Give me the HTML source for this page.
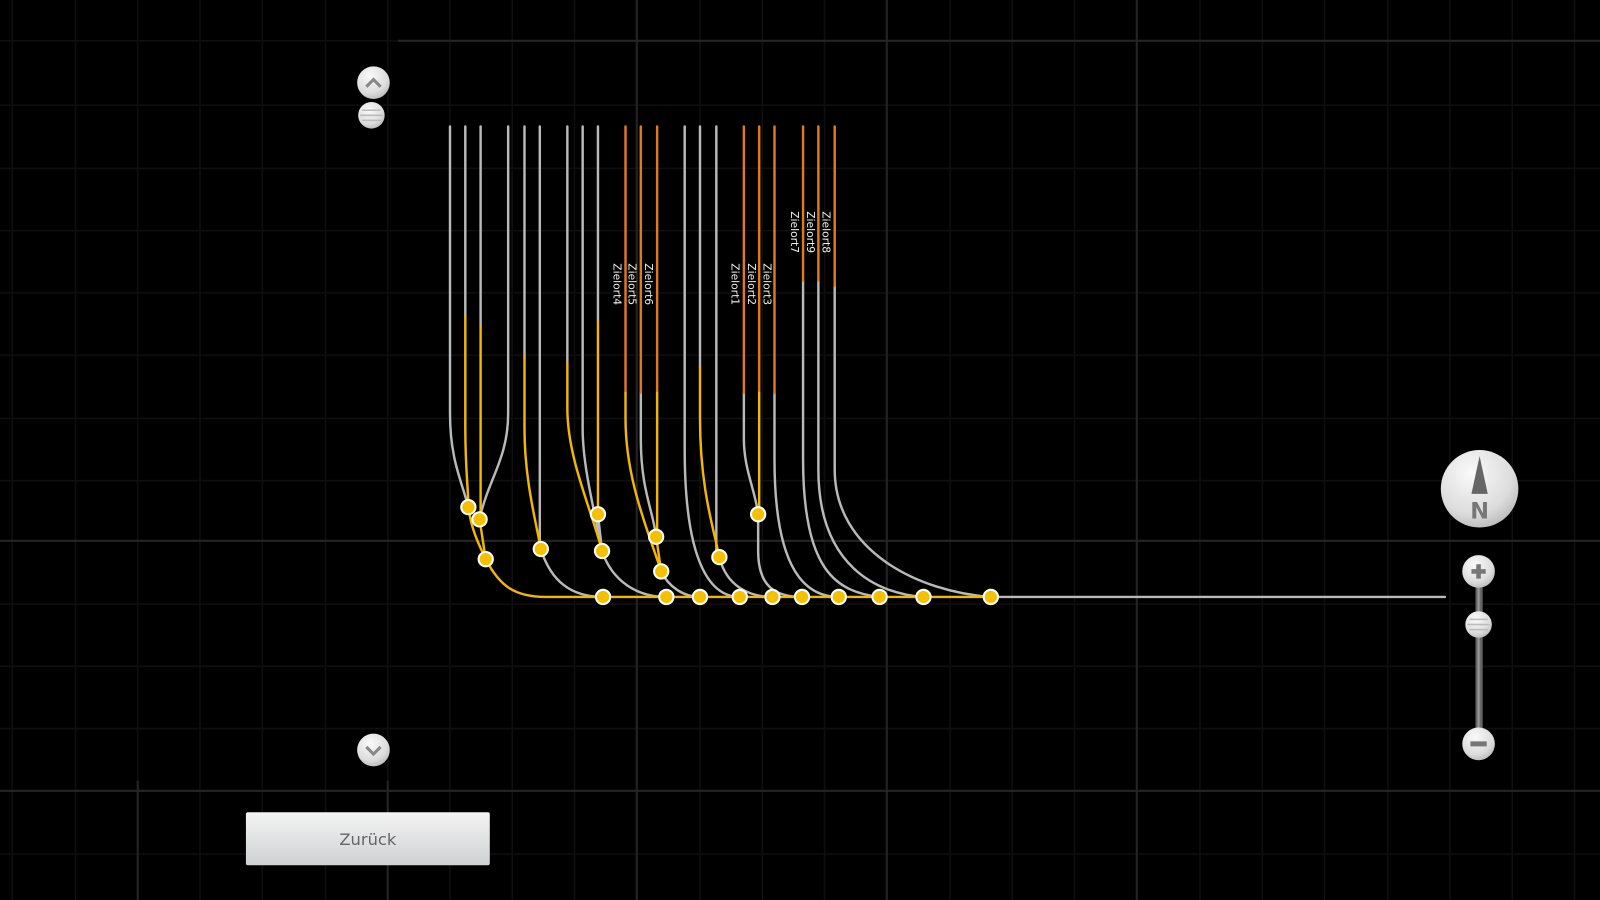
<!DOCTYPE html>
<html><head><meta charset="utf-8"><style>
html,body{margin:0;padding:0;background:#000;width:1600px;height:900px;overflow:hidden}
svg{display:block}
</style></head><body>
<svg width="1600" height="900" viewBox="0 0 1568 882" xmlns="http://www.w3.org/2000/svg">
<defs>
<radialGradient id="btn" cx="40%" cy="30%" r="75%"><stop offset="0" stop-color="#fafafa"/><stop offset="0.7" stop-color="#dcdcdc"/><stop offset="1" stop-color="#b8b8b8"/></radialGradient>
<linearGradient id="zb" x1="0" y1="0" x2="0" y2="1"><stop offset="0" stop-color="#f4f4f4"/><stop offset="1" stop-color="#cfd1d2"/></linearGradient>
</defs>
<rect width="1568" height="882" fill="#000"/>
<g stroke="#0f0f0f" stroke-width="1.5">
<path d="M12 0V882M74 0V882M135 0V765M196 0V882M257 0V882M319 0V882M380 0V765M441 0V882M502 0V882M563 0V882M686 0V882M747 0V882M808 0V882M931 0V882M992 0V882M1053 0V882M1176 0V882M1237 0V882M1298 0V882M1360 0V882M1421 0V882M1482 0V882M1543 0V882"/>
<path d="M0 40H390M0 103H1568M0 165H1568M0 226H1568M0 287H1568M0 348H1568M0 410H1568M0 471H1568M0 592H1568M0 653H1568M0 714H1568M0 837H1568"/>
</g>
<g stroke="#252525" stroke-width="2">
<path d="M624 0V882M869 0V882M1114 0V882M135 765V882M380 765V882"/>
<path d="M390 40H1568M0 530H1568M0 775H1568"/>
</g>
<g fill="none" stroke-width="2.4" stroke-linecap="round">
<g stroke="#b9b9b9">
<path d="M441 124V405C441 450 452 470 459 497"/>
<path d="M498 124V405C498 450 478 470 470 509"/>
<path d="M529 124V538"/>
<path d="M530 538C540 570 560 585 591 585"/>
<path d="M556 124V355"/><path d="M571 124V420C571 460 585 510 590 540"/>
<path d="M586 504L590 540"/>
<path d="M590 540C600 570 625 585 653 585"/>
<path d="M628 385V430C628 480 640 500 643 526"/>
<path d="M648 560C655 575 670 585 686 585"/>
<path d="M671 124V440C671 560 700 585 725 585"/>
<path d="M686 124V360"/>
<path d="M702 124V546"/>
<path d="M705 546C712 575 735 585 757 585"/>
<path d="M729 385V430C729 460 740 480 743 504"/>
<path d="M743 504V540C743 575 760 585 786 585"/>
<path d="M759 385V450C759 560 790 585 822 585"/>
<path d="M787 275V450C787 560 820 580 862 585"/>
<path d="M802 275V460C802 555 860 582 905 585"/>
<path d="M818 280V460C818 540 900 580 971 585"/>
<path d="M456 124V310"/><path d="M471 124V320"/><path d="M514 124V350"/><path d="M586 124V315"/>
<path d="M971 585H1416"/>
</g>
<g stroke="#e07a1e">
<path d="M613 124V385M628 124V385M644 124V385M729 124V385M744 124V385M759 124V385M787 124V275M802 124V275M818 124V280"/>
</g>
<g stroke="#f2b705">
<path d="M456 310V420C456 460 459 480 459 497"/>
<path d="M471 320V509"/>
<path d="M459 497C462 520 470 535 476 548"/>
<path d="M470 509L476 548"/>
<path d="M476 548C490 575 505 585 535 585H971"/>
<path d="M514 350V420C514 470 525 510 530 538"/>
<path d="M556 355V400C556 450 580 500 590 540"/>
<path d="M586 315V504"/>
<path d="M613 385V410C613 470 635 520 648 560"/>
<path d="M644 385V526"/>
<path d="M643 526L648 560"/>
<path d="M686 360V410C686 480 700 520 705 546"/>
<path d="M744 385V504"/>
</g>
</g>
<g fill="#f5c000" stroke="#fff" stroke-width="2">
<circle cx="459" cy="497" r="7"/><circle cx="470" cy="509" r="7"/><circle cx="476" cy="548" r="7"/>
<circle cx="530" cy="538" r="7"/><circle cx="586" cy="504" r="7"/><circle cx="590" cy="540" r="7"/>
<circle cx="643" cy="526" r="7"/><circle cx="648" cy="560" r="7"/><circle cx="705" cy="546" r="7"/><circle cx="743" cy="504" r="7"/>
<circle cx="591" cy="585" r="7"/><circle cx="653" cy="585" r="7"/><circle cx="686" cy="585" r="7"/><circle cx="725" cy="585" r="7"/>
<circle cx="757" cy="585" r="7"/><circle cx="786" cy="585" r="7"/><circle cx="822" cy="585" r="7"/><circle cx="862" cy="585" r="7"/>
<circle cx="905" cy="585" r="7"/><circle cx="971" cy="585" r="7"/>
</g>
<g fill="#eee" font-family="'DejaVu Sans','Liberation Sans',sans-serif" font-size="10.5">
<text transform="translate(601,258) rotate(90)">Zielort4</text>
<text transform="translate(616,258) rotate(90)">Zielort5</text>
<text transform="translate(632,258) rotate(90)">Zielort6</text>
<text transform="translate(717,258) rotate(90)">Zielort1</text>
<text transform="translate(733,258) rotate(90)">Zielort2</text>
<text transform="translate(748,258) rotate(90)">Zielort3</text>
<text transform="translate(775,207) rotate(90)">Zielort7</text>
<text transform="translate(791,207) rotate(90)">Zielort9</text>
<text transform="translate(806,207) rotate(90)">Zielort8</text>
</g>
<circle cx="366" cy="81" r="16" fill="url(#btn)"/>
<path d="M359 85L366 78L373 85" fill="none" stroke="#888" stroke-width="3"/>
<circle cx="364" cy="113" r="13" fill="url(#btn)"/>
<path d="M355 108H373M353 113H375M355 118H373" stroke="#bbb" stroke-width="1.5"/>
<circle cx="366" cy="735" r="16" fill="url(#btn)"/>
<path d="M359 732L366 739L373 732" fill="none" stroke="#888" stroke-width="3"/>
<circle cx="1450" cy="479" r="38" fill="url(#btn)"/>
<path d="M1450 447L1442 484H1458Z" fill="#666"/>
<text x="1450" y="508" text-anchor="middle" font-family="'DejaVu Sans',sans-serif" font-weight="bold" font-size="22" fill="#777">N</text>
<rect x="1446" y="565" width="7" height="160" fill="#666" rx="2"/>
<rect x="1448" y="565" width="2" height="160" fill="#999"/>
<circle cx="1449" cy="560" r="16" fill="url(#btn)"/>
<path d="M1442 560H1456M1449 553V567" stroke="#777" stroke-width="4.5"/>
<circle cx="1449" cy="612" r="13" fill="url(#btn)"/>
<path d="M1440 607H1458M1438 612H1460M1440 617H1458" stroke="#bbb" stroke-width="1.5"/>
<circle cx="1449" cy="729" r="16" fill="url(#btn)"/>
<path d="M1441 729H1457" stroke="#777" stroke-width="5"/>
<rect x="241" y="796" width="239" height="52" rx="2" fill="url(#zb)"/>
<text x="360.5" y="828" text-anchor="middle" font-family="'DejaVu Sans','Liberation Sans',sans-serif" font-size="16" fill="#666">Zurück</text>
</svg>
</body></html>
